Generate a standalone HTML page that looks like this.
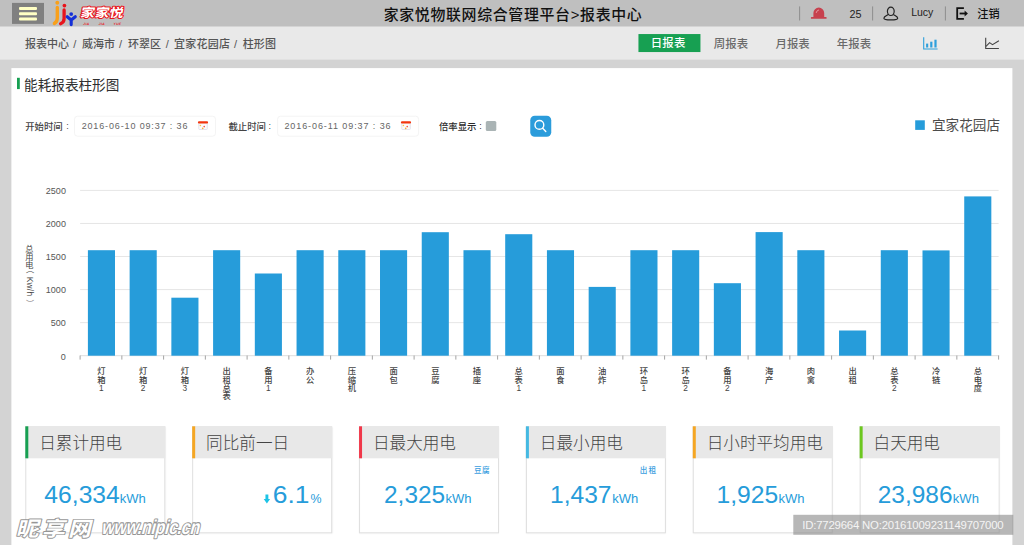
<!DOCTYPE html>
<html lang="zh-CN">
<head>
<meta charset="utf-8">
<title>家家悦物联网综合管理平台 &gt; 报表中心</title>
<style>
html,body{margin:0;padding:0}
body{width:1024px;height:545px;overflow:hidden;position:relative;background:#d3d3d3;font-family:"Liberation Sans",sans-serif}
div{position:absolute;box-sizing:border-box}
header,section,main{position:absolute;left:0;top:0;width:1024px;height:545px}
.h{position:absolute;left:0;top:0;width:1px;height:1px;margin:0;overflow:hidden;clip:rect(0 0 0 0);white-space:nowrap;font-size:1px;color:transparent}
.inp{border:1px solid #f4f4f4;border-radius:3.5px;background:#fff}
.card{border:1px solid #dfdfdf;background:#fff;box-shadow:.4px .8px 1.6px rgba(0,0,0,.10)}
.ch{left:-1px;top:-1px;width:140px;height:32px;background:#e8e8e8}
.ac{left:-1px;top:-1px;width:3px;height:32px}
#idbox{background:rgba(138,138,138,.62)}
#ov,#ov2{position:absolute;left:0;top:0;width:1024px;height:545px;pointer-events:none}
#ov text,#ov2 text{font-family:"Liberation Sans","Noto Sans CJK SC",sans-serif}
#ov text.m{font-weight:500}
#ov text.l{font-weight:300}
#ov text.b{font-weight:bold}
</style>
</head>
<body>
<header><div class="bg" style="left:0px;top:-1px;width:1024px;height:27px;transform:translate(0.00px,0.60px);background:#bfbfbf;"></div><div id="menu" style="left:12px;top:2px;width:32px;height:21px;transform:translate(0.00px,0.90px);background:#808080;"></div><div style="left:0;top:0;width:72px;height:12px;transform:translate(19.00px,7.00px) scale(.25);transform-origin:0 0;background:#ffffc4;border-radius:4px;"></div><div style="left:0;top:0;width:72px;height:12px;transform:translate(19.00px,12.25px) scale(.25);transform-origin:0 0;background:#ffffc4;border-radius:4px;"></div><div style="left:0;top:0;width:72px;height:12px;transform:translate(19.00px,17.50px) scale(.25);transform-origin:0 0;background:#ffffc4;border-radius:4px;"></div><span class="h">家家悦 JIA JIA YUE</span><h1 class="h">家家悦物联网综合管理平台&gt;报表中心</h1><span class="h">25</span><span class="h">Lucy</span><span class="h">注销</span></header>
<section><div class="bg" style="left:0px;top:26px;width:1024px;height:33px;transform:translate(0.00px,0.60px);background:#e9e9e9;"></div><nav><span class="h">报表中心 / 威海市 / 环翠区 / 宜家花园店 / 柱形图</span></nav><div id="tab-day" style="left:638px;top:34px;width:62px;height:18px;transform:translate(0.45px,0.05px);background:#17a052;"><span class="h">日报表</span></div><span class="h">周报表</span><span class="h">月报表</span><span class="h">年报表</span></section>
<main>
  <div class="bg" style="left:11px;top:68px;width:1001px;height:478px;transform:translate(0.40px,0.10px);background:#fff;"></div>
  <h2 class="h">能耗报表柱形图</h2>
  <span class="h">开始时间 :</span>
  <div class="inp" style="left:74px;top:115px;width:142px;height:21px;transform:translate(0.00px,0.70px);"><span class="h">2016-06-10 09:37 : 36</span></div>
  <span class="h">截止时间 :</span>
  <div class="inp" style="left:277px;top:115px;width:142px;height:21px;transform:translate(0.10px,0.70px);"><span class="h">2016-06-11 09:37 : 36</span></div>
  <span class="h">倍率显示 :</span>
  <div class="chk" style="left:0;top:0;width:42px;height:40px;transform:translate(485.80px,120.90px) scale(.25);transform-origin:0 0;background:#aab4b5;border-radius:6px;"></div>
  <div id="go" style="left:530px;top:115px;width:21px;height:21px;transform:translate(0.25px,0.75px);background:#2b9cdb;border-radius:4.5px;"></div>
  <span class="h">宜家花园店</span>
  <span class="h">总用电（Kw/h） 2500 2000 1500 1000 500 0</span>
  <span class="h">灯箱1 灯箱2 灯箱3 出租总表 备用1 办公 压缩机 面包 豆腐 插座 总表1 面食 油炸 环岛1 环岛2 备用2 海产 肉禽 出租 总表2 冷链 总电度</span>
  <div class="card" style="left:25px;top:426px;width:140px;height:107px;transform:translate(0.30px,0.30px);"><div class="ch"><h3 class="h">日累计用电</h3></div><div class="ac" style="background:#17a052"></div><span class="h">46,334kWh</span></div>
  <div class="card" style="left:192px;top:426px;width:140px;height:107px;transform:translate(0.17px,0.30px);"><div class="ch"><h3 class="h">同比前一日</h3></div><div class="ac" style="background:#f5a623"></div><span class="h">↓6.1%</span></div>
  <div class="card" style="left:359px;top:426px;width:140px;height:107px;transform:translate(0.04px,0.30px);"><div class="ch"><h3 class="h">日最大用电</h3></div><div class="ac" style="background:#f0384a"></div><span class="h">豆腐 2,325kWh</span></div>
  <div class="card" style="left:525px;top:426px;width:140px;height:107px;transform:translate(0.91px,0.30px);"><div class="ch"><h3 class="h">日最小用电</h3></div><div class="ac" style="background:#45b9e2"></div><span class="h">出租 1,437kWh</span></div>
  <div class="card" style="left:692px;top:426px;width:140px;height:107px;transform:translate(0.78px,0.30px);"><div class="ch"><h3 class="h">日小时平均用电</h3></div><div class="ac" style="background:#f5a623"></div><span class="h">1,925kWh</span></div>
  <div class="card" style="left:859px;top:426px;width:140px;height:107px;transform:translate(0.65px,0.30px);"><div class="ch"><h3 class="h">白天用电</h3></div><div class="ac" style="background:#6cc71f"></div><span class="h">23,986kWh</span></div>
</main>
<svg id="ov" viewBox="0 0 1024 545">
<g id="logo">
<circle cx="57.3" cy="2.7" r="1.95" fill="#f9a01b"/>
<path d="M57.3 7.4 V18 Q57.3 22 54.4 23.4" fill="none" stroke="#f9a01b" stroke-width="3.4" stroke-linecap="round"/>
<circle cx="64.4" cy="5.6" r="1.85" fill="#e8141c"/>
<path d="M64.1 10 V18.6 Q64.1 22.4 60.6 23.7" fill="none" stroke="#e8141c" stroke-width="3.3" stroke-linecap="round"/>
<circle cx="71.2" cy="14.1" r="1.9" fill="#1430d8"/>
<path d="M67.2 16.7 L71.2 20 L75.3 16.7 M71.2 20 V24.6" fill="none" stroke="#1430d8" stroke-width="3.1" stroke-linecap="round" stroke-linejoin="round"/>
</g>
<g transform="translate(79.8 -0.5) skewX(-12) scale(1.16 1)" stroke="#e8141c" stroke-width="2" stroke-linejoin="round" paint-order="stroke">
<text class="b" x="3.4" y="17.5" font-size="12.2" letter-spacing="0.2" fill="#fff">家家悦</text>
</g>
<g transform="skewX(-12)">
<text class="b" x="88.4" y="25.4" font-size="3.4" letter-spacing="0.4" fill="#e8141c">JIA</text>
<text class="b" x="103.9" y="25.4" font-size="3.4" letter-spacing="0.4" fill="#e8141c">JIA</text>
<text class="b" x="118.7" y="25.4" font-size="3.4" letter-spacing="0.4" fill="#e8141c">YUE</text>
</g>
<text class="m" x="383.7" y="19.66" font-size="14.9" fill="#111" textLength="258" lengthAdjust="spacing">家家悦物联网综合管理平台&gt;报表中心</text>
<rect x="799.1" y="6.4" width="1" height="14.1" fill="#8e8e8e"/>
<rect x="872.1" y="6.4" width="1" height="14.1" fill="#8e8e8e"/>
<rect x="944.9" y="6.4" width="1" height="14.1" fill="#8e8e8e"/>
<g id="alarm" fill="#c7414e">
<path d="M813.4 17.2 V13 A5.4 5.4 0 0 1 824.2 13 V17.2 Z"/>
<rect x="810.9" y="17" width="15.7" height="1.8" rx="0.6"/>
<path d="M816.2 12.6 A3 3 0 0 1 818.6 10" fill="none" stroke="#e9a6ad" stroke-width="0.8" stroke-linecap="round"/>
</g>
<text class="m" x="849.49" y="17.8" font-size="10.8" fill="#222">25</text>
<g id="user" fill="none" stroke="#222" stroke-width="1.2">
<ellipse cx="890.8" cy="11.3" rx="3.4" ry="4.2"/>
<path d="M888.2 14.6 C886 16 883.9 16.6 883.9 18.2 C883.9 19.5 887 19.9 890.8 19.9 C894.6 19.9 897.7 19.5 897.7 18.2 C897.7 16.6 895.6 16 893.4 14.6"/>
</g>
<text class="m" x="911.18" y="15.85" font-size="10.5" fill="#222">Lucy</text>
<g id="logout" stroke="#111" fill="none" stroke-width="1.8">
<path d="M963.9 8.2 H957.2 V18.8 H963.9" stroke-linejoin="miter"/>
<path d="M959.6 13.5 H965.2"/>
<path d="M964.6 10.6 L967.9 13.5 L964.6 16.4 Z" fill="#111" stroke="none"/>
</g>
<text class="m" x="977.26" y="17.86" font-size="11.2" fill="#111">注销</text>
<text class="m" x="24.98" y="47.78" font-size="11" fill="#555">报表中心</text>
<text class="m" x="82.01" y="47.78" font-size="11" fill="#555">威海市</text>
<text class="m" x="128.06" y="47.78" font-size="11" fill="#555">环翠区</text>
<text class="m" x="174.09" y="47.78" font-size="11" letter-spacing="0.2" fill="#555">宜家花园店</text>
<text class="m" x="242.78" y="47.78" font-size="11" letter-spacing="0.1" fill="#555">柱形图</text>
<text x="73.28" y="47.78" font-size="11" fill="#555">/</text>
<text x="119.08" y="47.78" font-size="11" fill="#555">/</text>
<text x="165.68" y="47.78" font-size="11" fill="#555">/</text>
<text x="234.08" y="47.78" font-size="11" fill="#555">/</text>
<text class="m" x="650.8" y="47.43" font-size="11.4" letter-spacing="0.15" fill="#fff">日报表</text>
<text class="m" x="713.78" y="47.63" font-size="11.4" letter-spacing="0.1" fill="#6a6a6a">周报表</text>
<text class="m" x="775.4" y="47.63" font-size="11.4" letter-spacing="0.1" fill="#6a6a6a">月报表</text>
<text class="m" x="836.7" y="47.63" font-size="11.4" letter-spacing="0.1" fill="#6a6a6a">年报表</text>
<g id="ic-bar" fill="#2d9fdc">
<path d="M923.7 37.3 V49 H937.6" fill="none" stroke="#2d9fdc" stroke-width="1.1"/>
<rect x="926.1" y="43.6" width="2.1" height="3.9"/>
<rect x="930.2" y="41.7" width="2.2" height="5.8"/>
<rect x="934.4" y="39.7" width="2.2" height="7.8"/>
</g>
<g id="ic-line" fill="none" stroke="#444" stroke-width="1.1">
<path d="M985.7 37.8 V48.5 H998.9"/>
<path d="M986 46.4 L989.6 42.6 L992.5 44.6 L998.9 40.7"/>
</g>
<rect x="17" y="77.8" width="2.8" height="11.3" fill="#17a052"/>
<text x="24.11" y="90.02" font-size="13.6" fill="#2e2e2e">能耗报表柱形图</text>
<text class="m" x="25.14" y="129.57" font-size="9.4" fill="#444">开始时间</text>
<text class="m" x="66.15" y="129.42" font-size="9" fill="#444">:</text>
<text class="m" x="228.43" y="129.57" font-size="9.4" fill="#444">截止时间</text>
<text class="m" x="268.55" y="129.42" font-size="9" fill="#444">:</text>
<text class="m" x="438.97" y="129.62" font-size="9.4" fill="#2a2a2a">倍率显示</text>
<text class="m" x="479.35" y="129.47" font-size="9" fill="#2a2a2a">:</text>
<text x="81.64" y="129.2" font-size="9" fill="#666" textLength="105.8" lengthAdjust="spacing">2016-06-10 09:37 : 36</text>
<text x="284.44" y="129.2" font-size="9" fill="#666" textLength="106.2" lengthAdjust="spacing">2016-06-11 09:37 : 36</text>
<g transform="translate(197.9 121.3)"><rect x="0.9" y="1.2" width="8.5" height="7" rx="0.7" fill="#fbfbfd" stroke="#dadae6" stroke-width="0.7"/><rect x="0" y="0" width="10.2" height="2.2" rx="1.1" fill="#f2360f"/><circle cx="2.5" cy="4.2" r="0.8" fill="#f9c846"/><circle cx="6.3" cy="5.3" r="0.8" fill="#f0503a"/><circle cx="4.8" cy="7" r="0.85" fill="#f7b03c"/></g>
<g transform="translate(400.9 121.3)"><rect x="0.9" y="1.2" width="8.5" height="7" rx="0.7" fill="#fbfbfd" stroke="#dadae6" stroke-width="0.7"/><rect x="0" y="0" width="10.2" height="2.2" rx="1.1" fill="#f2360f"/><circle cx="2.5" cy="4.2" r="0.8" fill="#f9c846"/><circle cx="6.3" cy="5.3" r="0.8" fill="#f0503a"/><circle cx="4.8" cy="7" r="0.85" fill="#f7b03c"/></g>
<g fill="none" stroke="#fff" stroke-width="1.4" stroke-linecap="round"><circle cx="539.4" cy="124.9" r="4.4"/><path d="M542.7 128.2 L545.8 131.5"/></g>
<rect x="915.2" y="120.3" width="9.6" height="9.6" fill="#269cda"/>
<text x="932.04" y="130.37" font-size="13.6" fill="#4c4c4c">宜家花园店</text>
<rect x="80.1" y="322.14" width="918.5" height="1" fill="#e6e6e6"/>
<rect x="80.1" y="289.08" width="918.5" height="1" fill="#e6e6e6"/>
<rect x="80.1" y="256.02" width="918.5" height="1" fill="#e6e6e6"/>
<rect x="80.1" y="222.96" width="918.5" height="1" fill="#e6e6e6"/>
<rect x="80.1" y="189.90" width="918.5" height="1" fill="#e6e6e6"/>
<rect x="80.1" y="355.20" width="919.1" height="1" fill="#dedede"/>
<rect x="79.60" y="355.50" width="1" height="4.1" fill="#a4a4a4"/>
<rect x="121.35" y="355.50" width="1" height="4.1" fill="#a4a4a4"/>
<rect x="163.10" y="355.50" width="1" height="4.1" fill="#a4a4a4"/>
<rect x="204.85" y="355.50" width="1" height="4.1" fill="#a4a4a4"/>
<rect x="246.60" y="355.50" width="1" height="4.1" fill="#a4a4a4"/>
<rect x="288.35" y="355.50" width="1" height="4.1" fill="#a4a4a4"/>
<rect x="330.10" y="355.50" width="1" height="4.1" fill="#a4a4a4"/>
<rect x="371.85" y="355.50" width="1" height="4.1" fill="#a4a4a4"/>
<rect x="413.60" y="355.50" width="1" height="4.1" fill="#a4a4a4"/>
<rect x="455.35" y="355.50" width="1" height="4.1" fill="#a4a4a4"/>
<rect x="497.10" y="355.50" width="1" height="4.1" fill="#a4a4a4"/>
<rect x="538.85" y="355.50" width="1" height="4.1" fill="#a4a4a4"/>
<rect x="580.60" y="355.50" width="1" height="4.1" fill="#a4a4a4"/>
<rect x="622.35" y="355.50" width="1" height="4.1" fill="#a4a4a4"/>
<rect x="664.10" y="355.50" width="1" height="4.1" fill="#a4a4a4"/>
<rect x="705.85" y="355.50" width="1" height="4.1" fill="#a4a4a4"/>
<rect x="747.60" y="355.50" width="1" height="4.1" fill="#a4a4a4"/>
<rect x="789.35" y="355.50" width="1" height="4.1" fill="#a4a4a4"/>
<rect x="831.10" y="355.50" width="1" height="4.1" fill="#a4a4a4"/>
<rect x="872.85" y="355.50" width="1" height="4.1" fill="#a4a4a4"/>
<rect x="914.60" y="355.50" width="1" height="4.1" fill="#a4a4a4"/>
<rect x="956.35" y="355.50" width="1" height="4.1" fill="#a4a4a4"/>
<rect x="998.10" y="355.50" width="1" height="4.1" fill="#a4a4a4"/>
<text x="60.85" y="359.5" font-size="9" fill="#555">0</text>
<text x="50.86" y="326.44" font-size="9" fill="#555">500</text>
<text x="45.86" y="293.38" font-size="9" fill="#555">1000</text>
<text x="45.86" y="260.32" font-size="9" fill="#555">1500</text>
<text x="45.86" y="227.26" font-size="9" fill="#555">2000</text>
<text x="45.86" y="194.2" font-size="9" fill="#555">2500</text>
<rect x="87.90" y="250.20" width="27.1" height="105.50" fill="#269cda"/>
<text class="m" x="97.3" y="374.4" font-size="8.3" fill="#444">灯</text>
<text class="m" x="97.3" y="382.7" font-size="8.3" fill="#444">箱</text>
<text class="m" x="99.08" y="391" font-size="8.3" fill="#444">1</text>
<rect x="129.63" y="250.20" width="27.1" height="105.50" fill="#269cda"/>
<text class="m" x="139.03" y="374.4" font-size="8.3" fill="#444">灯</text>
<text class="m" x="139.03" y="382.7" font-size="8.3" fill="#444">箱</text>
<text class="m" x="140.81" y="391" font-size="8.3" fill="#444">2</text>
<rect x="171.36" y="297.70" width="27.1" height="58.00" fill="#269cda"/>
<text class="m" x="180.76" y="374.4" font-size="8.3" fill="#444">灯</text>
<text class="m" x="180.76" y="382.7" font-size="8.3" fill="#444">箱</text>
<text class="m" x="182.54" y="391" font-size="8.3" fill="#444">3</text>
<rect x="213.09" y="250.20" width="27.1" height="105.50" fill="#269cda"/>
<text class="m" x="222.49" y="374.4" font-size="8.3" fill="#444">出</text>
<text class="m" x="222.49" y="382.7" font-size="8.3" fill="#444">租</text>
<text class="m" x="222.49" y="391" font-size="8.3" fill="#444">总</text>
<text class="m" x="222.49" y="399.3" font-size="8.3" fill="#444">表</text>
<rect x="254.82" y="273.50" width="27.1" height="82.20" fill="#269cda"/>
<text class="m" x="264.22" y="374.4" font-size="8.3" fill="#444">备</text>
<text class="m" x="264.22" y="382.7" font-size="8.3" fill="#444">用</text>
<text class="m" x="266" y="391" font-size="8.3" fill="#444">1</text>
<rect x="296.55" y="250.20" width="27.1" height="105.50" fill="#269cda"/>
<text class="m" x="305.95" y="374.4" font-size="8.3" fill="#444">办</text>
<text class="m" x="305.95" y="382.7" font-size="8.3" fill="#444">公</text>
<rect x="338.28" y="250.20" width="27.1" height="105.50" fill="#269cda"/>
<text class="m" x="347.68" y="374.4" font-size="8.3" fill="#444">压</text>
<text class="m" x="347.68" y="382.7" font-size="8.3" fill="#444">缩</text>
<text class="m" x="347.68" y="391" font-size="8.3" fill="#444">机</text>
<rect x="380.01" y="250.20" width="27.1" height="105.50" fill="#269cda"/>
<text class="m" x="389.41" y="374.4" font-size="8.3" fill="#444">面</text>
<text class="m" x="389.41" y="382.7" font-size="8.3" fill="#444">包</text>
<rect x="421.74" y="232.20" width="27.1" height="123.50" fill="#269cda"/>
<text class="m" x="431.14" y="374.4" font-size="8.3" fill="#444">豆</text>
<text class="m" x="431.14" y="382.7" font-size="8.3" fill="#444">腐</text>
<rect x="463.47" y="250.20" width="27.1" height="105.50" fill="#269cda"/>
<text class="m" x="472.87" y="374.4" font-size="8.3" fill="#444">插</text>
<text class="m" x="472.87" y="382.7" font-size="8.3" fill="#444">座</text>
<rect x="505.20" y="234.20" width="27.1" height="121.50" fill="#269cda"/>
<text class="m" x="514.6" y="374.4" font-size="8.3" fill="#444">总</text>
<text class="m" x="514.6" y="382.7" font-size="8.3" fill="#444">表</text>
<text class="m" x="516.38" y="391" font-size="8.3" fill="#444">1</text>
<rect x="546.93" y="250.20" width="27.1" height="105.50" fill="#269cda"/>
<text class="m" x="556.33" y="374.4" font-size="8.3" fill="#444">面</text>
<text class="m" x="556.33" y="382.7" font-size="8.3" fill="#444">食</text>
<rect x="588.66" y="286.90" width="27.1" height="68.80" fill="#269cda"/>
<text class="m" x="598.06" y="374.4" font-size="8.3" fill="#444">油</text>
<text class="m" x="598.06" y="382.7" font-size="8.3" fill="#444">炸</text>
<rect x="630.39" y="250.20" width="27.1" height="105.50" fill="#269cda"/>
<text class="m" x="639.79" y="374.4" font-size="8.3" fill="#444">环</text>
<text class="m" x="639.79" y="382.7" font-size="8.3" fill="#444">岛</text>
<text class="m" x="641.57" y="391" font-size="8.3" fill="#444">1</text>
<rect x="672.12" y="250.20" width="27.1" height="105.50" fill="#269cda"/>
<text class="m" x="681.52" y="374.4" font-size="8.3" fill="#444">环</text>
<text class="m" x="681.52" y="382.7" font-size="8.3" fill="#444">岛</text>
<text class="m" x="683.3" y="391" font-size="8.3" fill="#444">2</text>
<rect x="713.85" y="283.20" width="27.1" height="72.50" fill="#269cda"/>
<text class="m" x="723.25" y="374.4" font-size="8.3" fill="#444">备</text>
<text class="m" x="723.25" y="382.7" font-size="8.3" fill="#444">用</text>
<text class="m" x="725.03" y="391" font-size="8.3" fill="#444">2</text>
<rect x="755.58" y="232.10" width="27.1" height="123.60" fill="#269cda"/>
<text class="m" x="764.98" y="374.4" font-size="8.3" fill="#444">海</text>
<text class="m" x="764.98" y="382.7" font-size="8.3" fill="#444">产</text>
<rect x="797.31" y="250.20" width="27.1" height="105.50" fill="#269cda"/>
<text class="m" x="806.71" y="374.4" font-size="8.3" fill="#444">肉</text>
<text class="m" x="806.71" y="382.7" font-size="8.3" fill="#444">禽</text>
<rect x="839.04" y="330.50" width="27.1" height="25.20" fill="#269cda"/>
<text class="m" x="848.44" y="374.4" font-size="8.3" fill="#444">出</text>
<text class="m" x="848.44" y="382.7" font-size="8.3" fill="#444">租</text>
<rect x="880.77" y="250.20" width="27.1" height="105.50" fill="#269cda"/>
<text class="m" x="890.17" y="374.4" font-size="8.3" fill="#444">总</text>
<text class="m" x="890.17" y="382.7" font-size="8.3" fill="#444">表</text>
<text class="m" x="891.95" y="391" font-size="8.3" fill="#444">2</text>
<rect x="922.50" y="250.40" width="27.1" height="105.30" fill="#269cda"/>
<text class="m" x="931.9" y="374.4" font-size="8.3" fill="#444">冷</text>
<text class="m" x="931.9" y="382.7" font-size="8.3" fill="#444">链</text>
<rect x="964.23" y="196.40" width="27.1" height="159.30" fill="#269cda"/>
<text class="m" x="973.63" y="374.4" font-size="8.3" fill="#444">总</text>
<text class="m" x="973.63" y="382.7" font-size="8.3" fill="#444">电</text>
<text class="m" x="973.63" y="391" font-size="8.3" fill="#444">度</text>
<text x="25.3" y="251.72" font-size="8.2" fill="#444">总</text>
<text x="25.3" y="259.82" font-size="8.2" fill="#444">用</text>
<text x="25.3" y="267.92" font-size="8.2" fill="#444">电</text>
<g transform="translate(26.7 0) rotate(90)">
<text x="265.6" y="0" font-size="8.2" fill="#444">（</text>
<text x="276.65" y="0" font-size="8.4" letter-spacing="0.3" fill="#444">Kw/h</text>
<text x="299.32" y="0" font-size="8.2" fill="#444">）</text>
</g>
<text class="l" x="39.25" y="449.31" font-size="16.6" fill="#444">日累计用电</text>
<text class="l" x="206.12" y="449.31" font-size="16.6" fill="#444">同比前一日</text>
<text class="l" x="372.99" y="449.31" font-size="16.6" fill="#444">日最大用电</text>
<text class="l" x="539.86" y="449.31" font-size="16.6" fill="#444">日最小用电</text>
<text class="l" x="706.73" y="449.31" font-size="16.6" fill="#444">日小时平均用电</text>
<text class="l" x="873.6" y="449.31" font-size="16.6" fill="#444">白天用电</text>
<text x="44.39" y="502.9" font-size="24" fill="#269cda" textLength="75.4" lengthAdjust="spacingAndGlyphs">46,334</text>
<text x="119.76" y="502.9" font-size="13" fill="#269cda">kWh</text>
<text x="384.07" y="502.9" font-size="24" fill="#269cda" textLength="61" lengthAdjust="spacingAndGlyphs">2,325</text>
<text x="445.46" y="502.9" font-size="13" fill="#269cda">kWh</text>
<text x="550.04" y="502.9" font-size="24" fill="#269cda" textLength="61.5" lengthAdjust="spacingAndGlyphs">1,437</text>
<text x="612.16" y="502.9" font-size="13" fill="#269cda">kWh</text>
<text x="716.44" y="502.9" font-size="24" fill="#269cda" textLength="61.7" lengthAdjust="spacingAndGlyphs">1,925</text>
<text x="778.56" y="502.9" font-size="13" fill="#269cda">kWh</text>
<text x="877.77" y="502.9" font-size="24" fill="#269cda" textLength="74.7" lengthAdjust="spacingAndGlyphs">23,986</text>
<text x="952.86" y="502.9" font-size="13" fill="#269cda">kWh</text>
<text x="272.86" y="503.2" font-size="24" fill="#269cda" textLength="36.7" lengthAdjust="spacingAndGlyphs">6.1</text>
<text x="310.52" y="503.3" font-size="12.4" fill="#269cda">%</text>
<path d="M265.45 494.4 H268.35 V498.9 H270.1 L266.9 503.4 L263.7 498.9 H265.45 Z" fill="#1cc3e6"/>
<text class="m" x="474" y="472.89" font-size="7.6" letter-spacing="0.47" fill="#3a9ee0">豆腐</text>
<text class="m" x="639.87" y="472.89" font-size="7.6" letter-spacing="1" fill="#3a9ee0">出租</text>
<g transform="translate(17.20 535.60) skewX(-14) scale(1.120 1.000)" stroke="#969696" stroke-width="1.88" stroke-linejoin="round" paint-order="stroke">
<text class="b" x="-1.2" y="0" font-size="20.4" letter-spacing="2.86" fill="#fff">昵享网</text>
</g>
<g transform="translate(101.40 534.00) skewX(-14) scale(1.000 1.250)" stroke="#969696" stroke-width="1.78" stroke-linejoin="round" paint-order="stroke">
<text class="b" x="-0.45" y="0" font-size="16" fill="#fff" textLength="98" lengthAdjust="spacing">www.nipic.cn</text>
</g>
</svg>
<div id="idbox" style="left:793px;top:514px;width:220px;height:20px;transform:translate(0.30px,0.80px);"><span class="h">ID:7729664 NO:20161009231149707000</span></div>
<svg id="ov2" viewBox="0 0 1024 545"><text x="802.25" y="529.1" font-size="11.4" fill="#f4f4f4" textLength="201.4" lengthAdjust="spacing">ID:7729664 NO:20161009231149707000</text></svg>
</body>
</html>
